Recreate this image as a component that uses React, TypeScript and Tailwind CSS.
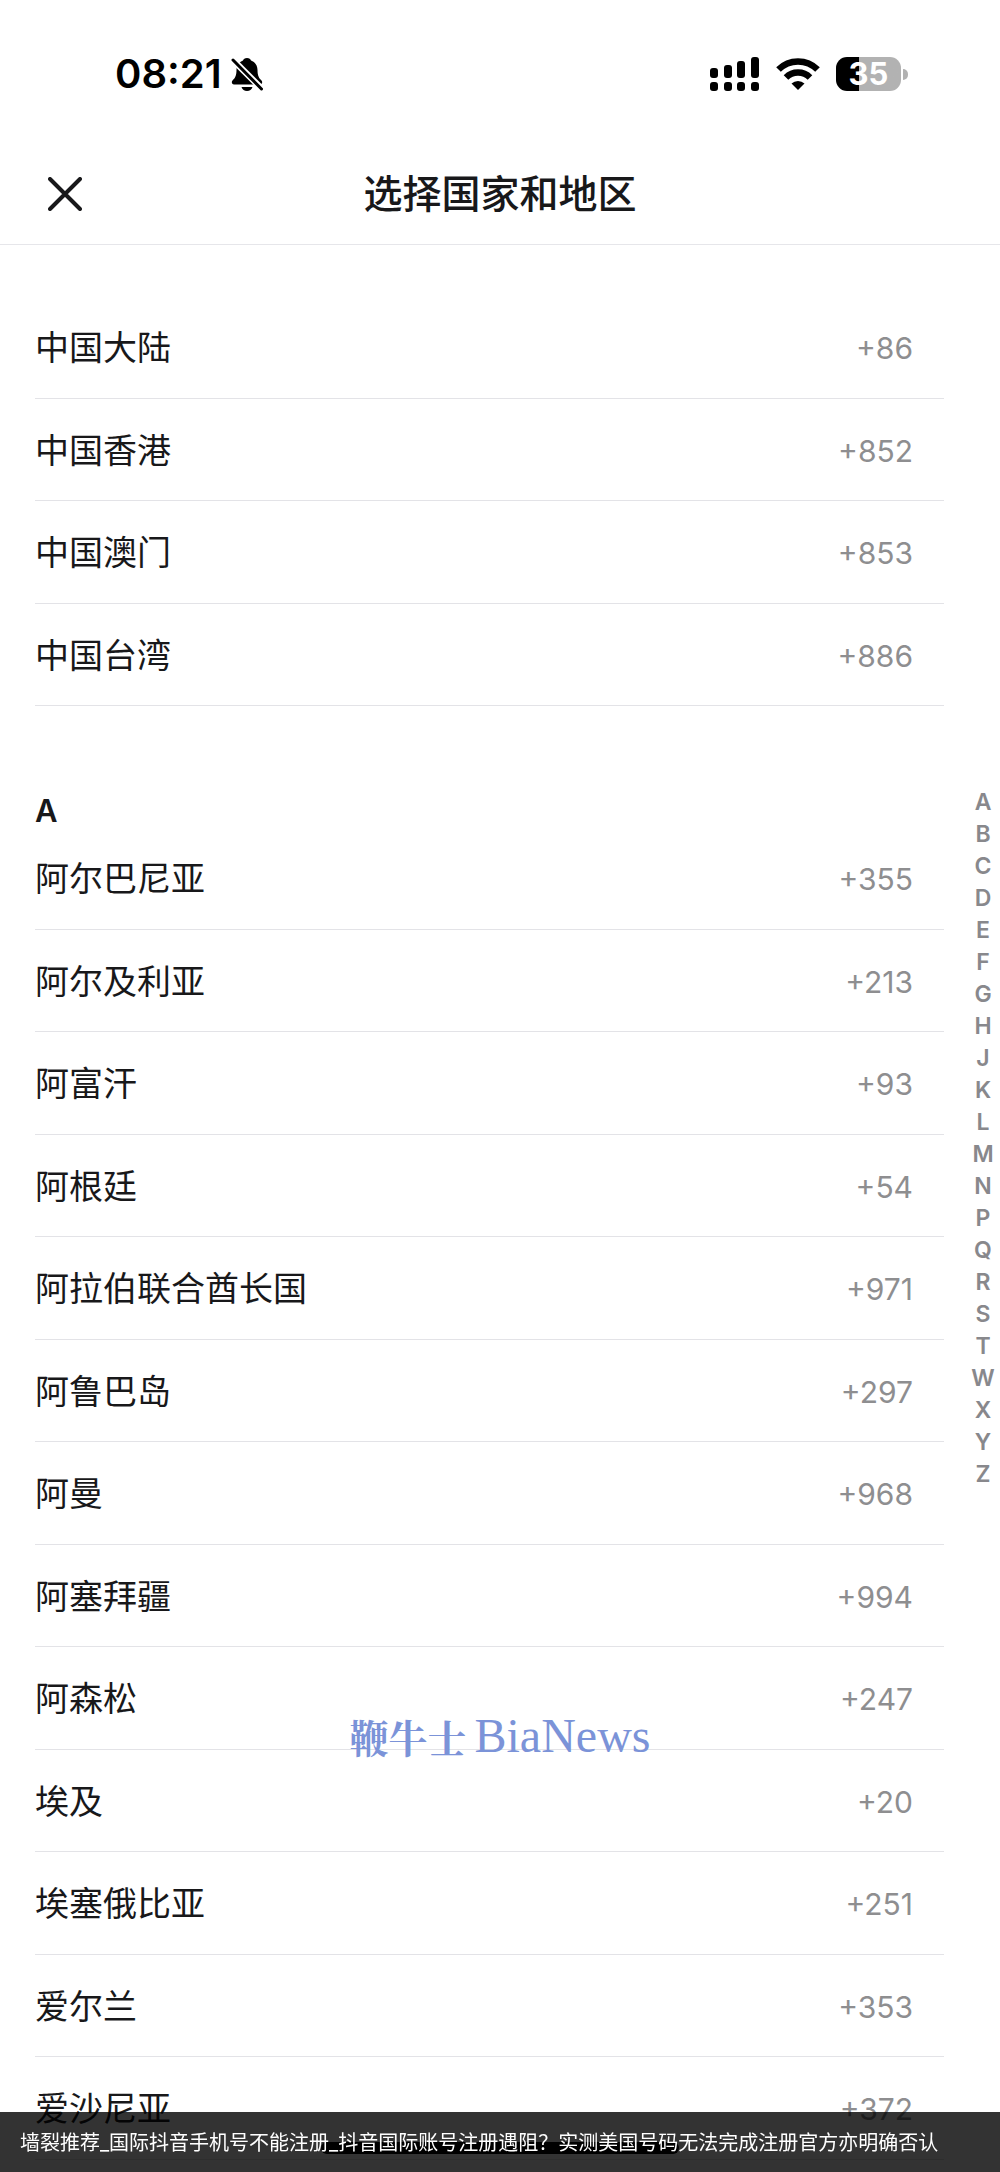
import React from 'react';

const pinned = [
  { name: '中国大陆', code: '+86' },
  { name: '中国香港', code: '+852' },
  { name: '中国澳门', code: '+853' },
  { name: '中国台湾', code: '+886' },
];

const groupA = [
  { name: '阿尔巴尼亚', code: '+355' },
  { name: '阿尔及利亚', code: '+213' },
  { name: '阿富汗', code: '+93' },
  { name: '阿根廷', code: '+54' },
  { name: '阿拉伯联合酋长国', code: '+971' },
  { name: '阿鲁巴岛', code: '+297' },
  { name: '阿曼', code: '+968' },
  { name: '阿塞拜疆', code: '+994' },
  { name: '阿森松', code: '+247' },
  { name: '埃及', code: '+20' },
  { name: '埃塞俄比亚', code: '+251' },
  { name: '爱尔兰', code: '+353' },
  { name: '爱沙尼亚', code: '+372' },
];

const letters = 'ABCDEFGHJKLMNPQRSTWXYZ'.split('');

const StatusBar = () => (
  <div className="flex h-36 items-center justify-between pt-1 pl-[115px] pr-[92px] text-black">
    <div className="flex items-center gap-[9px]">
      <span className="text-[40px] leading-10 font-semibold">08:21</span>
      <svg width="32" height="34" viewBox="0 0 32 34" aria-label="静音">
        <path d="M16 1c-2.300 0-3.500 1-4 2.500C8 5 5.500 8.500 5.500 13c0 6-1.500 8-4 10.500C.2 25 .8 27.500 3 27.500h26c2.200 0 2.800-2.500 1.500-4C28 21 26.500 19 26.500 13c0-4.500-2.500-8-6.500-9.500C19.500 2 18.300 1 16 1z" />
        <path d="M10.500 30h11c-.8 2.500-2.800 4-5.500 4s-4.700-1.500-5.500-4z" />
        <path d="M3.500 4.500 L31 32" stroke="#fff" strokeWidth="6.500" />
        <path d="M2 3 L30.500 32" stroke="#000" strokeWidth="3" strokeLinecap="round" />
      </svg>
    </div>
    <div className="flex items-center">
      <svg width="50" height="34" viewBox="0 0 50 34" aria-label="信号">
        <rect x="0" y="11" width="8" height="10" rx="3" />
        <rect x="14" y="8" width="8" height="13" rx="3" />
        <rect x="27" y="4" width="8" height="17" rx="3" />
        <rect x="41" y="0" width="8" height="21" rx="3" />
        <rect x="0" y="25" width="8" height="9" rx="3" />
        <rect x="14" y="25" width="8" height="9" rx="3" />
        <rect x="27" y="25" width="8" height="9" rx="3" />
        <rect x="41" y="25" width="8" height="9" rx="3" />
      </svg>
      <svg className="ml-4" width="44" height="32" viewBox="0 0 44 32" fill="none" stroke="#000" aria-label="Wi-Fi">
        <path d="M2.500 11.500 A27.500 27.500 0 0 1 41.500 11.500" strokeWidth="6.500" />
        <path d="M10 19.500 A17 17 0 0 1 34 19.500" strokeWidth="6.500" />
        <path d="M22 32 L15.500 25.500 A9.500 9.500 0 0 1 28.500 25.500 Z" fill="#000" stroke="none" />
      </svg>
      <div className="ml-4 flex items-center gap-[2px]">
        <div className="flex h-[34px] w-[65px] items-center justify-center rounded-[11px] bg-linear-to-r from-black from-35% to-[#b2b2b2] to-35% text-[31px] leading-8 font-bold text-white">
          35
        </div>
        <div className="h-[11px] w-[5px] rounded-r-full bg-[#b2b2b2]"></div>
      </div>
    </div>
  </div>
);

const CountryRow = ({ name, code }: { name: string; code: string }) => (
  <li className="border-b border-[#e3e3e7] odd:h-[103px] even:h-[102px]">
    <button className="flex h-full w-full items-center justify-between pt-[2px] pr-[31px] text-left">
      <span className="text-[34px] leading-10 text-[#18181a]">{name}</span>
      <span className="text-[30px] leading-10 text-[#8e8e90]">{code}</span>
    </button>
  </li>
);

const App = () => {
  return (
    <div className="relative min-h-screen bg-white pb-3 font-[Inter,'Noto_Sans_CJK_SC',sans-serif]">
      <StatusBar />

      <header className="grid h-[101px] grid-cols-[1fr_auto_1fr] items-center border-b border-[#e6e6ea] px-12">
        <button aria-label="关闭" className="justify-self-start">
          <svg width="34" height="34" viewBox="0 0 34 34" stroke="#18181a" strokeWidth="4" strokeLinecap="round">
            <path d="M2 2 L32 32 M32 2 L2 32" />
          </svg>
        </button>
        <h1 className="text-[39px] leading-12 font-medium text-[#18181a]">选择国家和地区</h1>
      </header>

      <div className="flex items-start">
        <main className="flex-1 pt-[51px] pl-[35px]">
          <ul>
            {pinned.map((item) => (
              <CountryRow key={item.name} {...item} />
            ))}
          </ul>
          <h2 id="A" className="pt-[89px] text-[31px] leading-8 font-semibold text-[#18181a]">A</h2>
          <ul>
            {groupA.map((item) => (
              <CountryRow key={item.name} {...item} />
            ))}
          </ul>
        </main>

        <nav aria-label="索引" className="mt-[541px] ml-[22px] flex w-[34px] flex-col items-center">
          {letters.map((letter) => (
            <a key={letter} href={`#${letter}`} className="text-[23px] leading-8 font-semibold text-[#88888c]">
              {letter}
            </a>
          ))}
        </nav>
      </div>

      {/* Watermark */}
      <div className="pointer-events-none absolute inset-x-0 top-[1712px] flex items-center justify-center gap-2 text-[#7b93d8]">
        <span className="font-['Noto_Serif_CJK_SC','Noto_Sans_CJK_SC',serif] text-[39px] leading-12 font-bold">鞭牛士</span>
        <span className="font-['Liberation_Serif',serif] text-[48px] leading-12">BiaNews</span>
      </div>

      {/* Home indicator */}
      <div className="fixed bottom-[18px] left-1/2 h-3 w-[358px] -translate-x-1/2 rounded-full bg-black"></div>

      {/* Caption */}
      <div className="fixed inset-x-0 bottom-0 h-[60px] bg-black/80 px-5 text-[20px] leading-[62px] whitespace-nowrap text-white">
        墙裂推荐_国际抖音手机号不能注册_抖音国际账号注册遇阻？实测美国号码无法完成注册官方亦明确否认
      </div>
    </div>
  );
};

export default App;
